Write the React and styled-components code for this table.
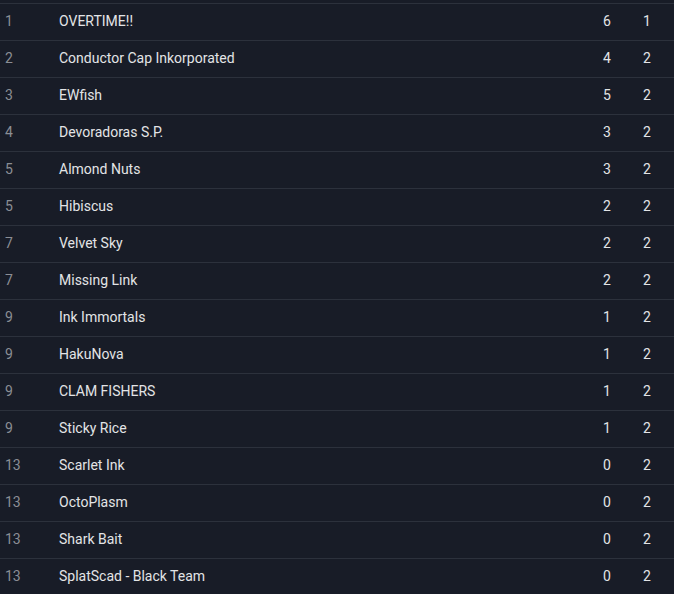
import styled, { createGlobalStyle } from "styled-components";

const GlobalStyle = createGlobalStyle`
  html, body {
    margin: 0;
    background: #181c27;
  }
`;

const Table = styled.div`
  padding-top: 3px;
  background: #181c27;
  font-family: Roboto, "Liberation Sans", sans-serif;
  font-size: 14px;
  color: #e3e4e6;
`;

const Row = styled.div`
  display: grid;
  grid-template-columns: 59px 1fr 40px 40px;
  padding-right: 7px;
  padding-bottom: 2px;
  height: 34px;
  align-items: center;
  border-top: 1px solid #2c313c;
`;

const Rank = styled.span`
  padding-left: 5px;
  color: #8b8e95;
`;

const Name = styled.span`
  color: #e3e4e6;
`;

const Num = styled.span`
  text-align: center;
  color: #e3e4e6;
`;

const rows = [
  [1, "OVERTIME!!", 6, 1],
  [2, "Conductor Cap Inkorporated", 4, 2],
  [3, "EWfish", 5, 2],
  [4, "Devoradoras S.P.", 3, 2],
  [5, "Almond Nuts", 3, 2],
  [5, "Hibiscus", 2, 2],
  [7, "Velvet Sky", 2, 2],
  [7, "Missing Link", 2, 2],
  [9, "Ink Immortals", 1, 2],
  [9, "HakuNova", 1, 2],
  [9, "CLAM FISHERS", 1, 2],
  [9, "Sticky Rice", 1, 2],
  [13, "Scarlet Ink", 0, 2],
  [13, "OctoPlasm", 0, 2],
  [13, "Shark Bait", 0, 2],
  [13, "SplatScad - Black Team", 0, 2],
];

export default function App() {
  return (
    <>
      <GlobalStyle />
      <Table>
        {rows.map(([rank, name, wins, played], i) => (
          <Row key={i}>
            <Rank>{rank}</Rank>
            <Name>{name}</Name>
            <Num>{wins}</Num>
            <Num>{played}</Num>
          </Row>
        ))}
      </Table>
    </>
  );
}
